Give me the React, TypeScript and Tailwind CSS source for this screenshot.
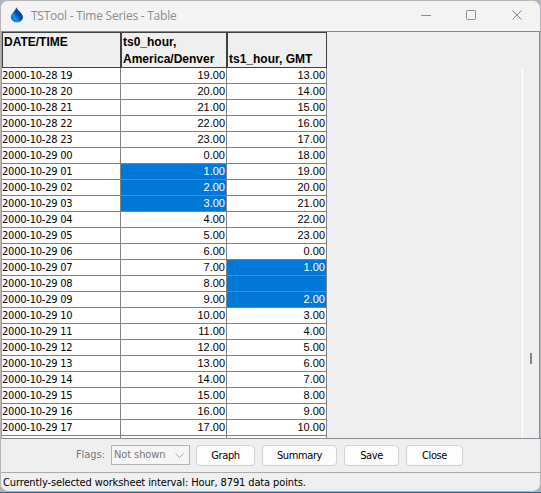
const tahoma = "font-['DejaVu_Sans_Condensed','Noto_Sans',sans-serif]";
const arial = "font-['Liberation_Sans',Arial,sans-serif]";

type Row = [date: string, ts0: string, ts1: string, selected?: "ts0" | "ts1"];

const rows: Row[] = [
  ["2000-10-28 19", "19.00", "13.00"],
  ["2000-10-28 20", "20.00", "14.00"],
  ["2000-10-28 21", "21.00", "15.00"],
  ["2000-10-28 22", "22.00", "16.00"],
  ["2000-10-28 23", "23.00", "17.00"],
  ["2000-10-29 00", "0.00", "18.00"],
  ["2000-10-29 01", "1.00", "19.00", "ts0"],
  ["2000-10-29 02", "2.00", "20.00", "ts0"],
  ["2000-10-29 03", "3.00", "21.00", "ts0"],
  ["2000-10-29 04", "4.00", "22.00"],
  ["2000-10-29 05", "5.00", "23.00"],
  ["2000-10-29 06", "6.00", "0.00"],
  ["2000-10-29 07", "7.00", "1.00", "ts1"],
  ["2000-10-29 08", "8.00", "", "ts1"],
  ["2000-10-29 09", "9.00", "2.00", "ts1"],
  ["2000-10-29 10", "10.00", "3.00"],
  ["2000-10-29 11", "11.00", "4.00"],
  ["2000-10-29 12", "12.00", "5.00"],
  ["2000-10-29 13", "13.00", "6.00"],
  ["2000-10-29 14", "14.00", "7.00"],
  ["2000-10-29 15", "15.00", "8.00"],
  ["2000-10-29 16", "16.00", "9.00"],
  ["2000-10-29 17", "17.00", "10.00"],
];

function TitleBar() {
  return (
    <div className="flex h-[31px] shrink-0 items-center border-b border-[#858996] bg-[#f3f3f3] pb-[2px] pl-[9px]">
      <svg width="14" height="17" viewBox="0 0 14 17">
        <defs>
          <linearGradient id="drop" x1="0.9" y1="0.3" x2="0.2" y2="0.9">
            <stop offset="0" stopColor="#0a2d8c" />
            <stop offset="0.45" stopColor="#0b50b4" />
            <stop offset="0.75" stopColor="#1199e8" />
            <stop offset="1" stopColor="#0870c8" />
          </linearGradient>
        </defs>
        <path d="M6.3 .3C6.8 2.9 13 6.5 13 10.2A6.1 5.3 0 0 1 .8 10C.8 6.5 5.6 4 6.3.3Z" fill="url(#drop)" />
      </svg>
      <span className="ml-[7px] pt-px font-['Open_Sans','Noto_Sans',sans-serif] text-[12px] leading-4 tracking-[-0.24px] whitespace-nowrap text-[#8b8b8b]">
        TSTool - Time Series - Table
      </span>
      <svg className="mr-4 ml-auto" width="104" height="12" viewBox="0 0 104 12" fill="none" stroke="#8b8b8b">
        <path d="M1 6.5H11" />
        <rect x="46.5" y="1.5" width="9" height="9" rx="1" />
        <path d="M92.5 1.5L101.5 10.5M101.5 1.5L92.5 10.5" />
      </svg>
    </div>
  );
}

function ValueCell({ value, selected, width }: { value: string; selected: boolean; width: string }) {
  return (
    <div
      className={`${width} ${arial} h-4 border-r border-b border-[#808080] pr-px text-right text-[11px] leading-[15px] ${
        selected ? "bg-[#0078d7] text-white" : "bg-white text-black"
      }`}
    >
      {value}
    </div>
  );
}

function Table() {
  return (
    <div className="w-[325px] shrink-0 overflow-hidden">
      <div className={`${arial} flex h-9 border-t border-b border-[#404040] bg-[#efefef] text-[12px] leading-[17px] font-bold text-black`}>
        <div className="w-[119px] border-r border-l border-[#404040] pt-px pl-px">DATE/TIME</div>
        <div className="w-[106px] border-r border-l border-[#404040] pt-px pl-px whitespace-nowrap">
          ts0_hour,
          <br />
          America/Denver
        </div>
        <div className="flex w-[100px] items-end border-r border-l border-[#404040] pl-px whitespace-nowrap">
          <span className="-mb-px">ts1_hour, GMT</span>
        </div>
      </div>
      {rows.map(([date, ts0, ts1, selected]) => (
        <div key={date} className="flex">
          <div className={`${tahoma} h-4 w-[119px] border-r border-b border-[#808080] bg-white text-[11px] leading-[15px] tracking-[-0.22px] text-black`}>
            {date}
          </div>
          <ValueCell value={ts0} selected={selected === "ts0"} width="w-[106px]" />
          <ValueCell value={ts1} selected={selected === "ts1"} width="w-[100px]" />
        </div>
      ))}
      <div className="flex h-[2px] bg-white">
        <div className="w-[119px] border-r border-[#808080]" />
        <div className="w-[106px] border-r border-[#808080]" />
        <div className="w-[100px] border-r border-[#808080]" />
      </div>
    </div>
  );
}

function Button({ label, width }: { label: string; width: string }) {
  return (
    <button className={`${width} flex h-[21px] items-center justify-center rounded-[4px] border border-[#d0d0d0] bg-[#fdfdfd] pt-px tracking-[-0.4px] text-black`}>
      {label}
    </button>
  );
}

export default function App() {
  return (
    <div className="flex h-[493px] w-[541px] flex-col overflow-hidden border-b border-[#1e68a8] bg-[#b4b5bb]">
      <div className="flex h-[492px] w-[540px] flex-col overflow-hidden rounded-[8px] border border-r-0 border-[#b5b5b5] bg-[#efefef]">
        <TitleBar />
        <div className="flex h-[407px] shrink-0 border-r border-b border-l border-[#858996] border-l-[#a0a0a0]">
          <Table />
          <div className="flex flex-1 justify-end">
            <div className="mt-9 h-[370px] w-px bg-white" />
            <div className="mt-[321px] mr-[7px] ml-[7px] h-[11px] w-[2px] bg-[#858585]" />
          </div>
        </div>
        <div className={`${tahoma} flex h-[33px] shrink-0 items-start gap-[7px] pt-[6px] pl-[75px] text-[11px] tracking-[-0.1px]`}>
          <span className="-mr-[2px] w-[30px] pt-[2px] leading-4 text-[#777]">Flags:</span>
          <div className="-mr-px flex h-5 w-[79px] items-center justify-between border border-[#b4b4b4] bg-[#f5f5f5] pr-[5px] pl-[2px] whitespace-nowrap text-[#777]">
            Not shown
            <svg width="9" height="5" viewBox="0 0 9 5" fill="none" stroke="#aaa">
              <path d="M.5.5L4.5 4.5L8.5.5" />
            </svg>
          </div>
          <Button label="Graph" width="w-[59px]" />
          <Button label="Summary" width="w-[75px]" />
          <Button label="Save" width="w-[55px]" />
          <Button label="Close" width="w-[57px]" />
        </div>
        <div className={`${tahoma} flex-1 border-t border-[#aaa] pl-[2px] text-[11px] leading-[20px] tracking-[-0.12px] whitespace-nowrap text-black`}>
          Currently-selected worksheet interval: Hour, 8791 data points.
        </div>
      </div>
    </div>
  );
}
